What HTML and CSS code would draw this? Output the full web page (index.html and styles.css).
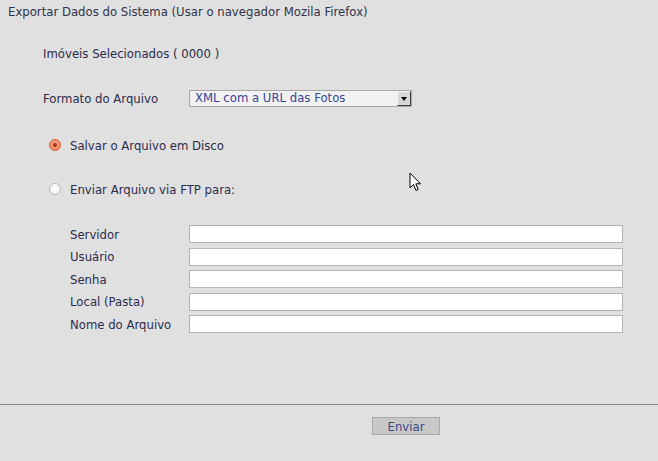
FILE: index.html
```html
<!DOCTYPE html>
<html lang="pt">
<head>
<meta charset="utf-8">
<title>Exportar Dados do Sistema</title>
<link rel="stylesheet" href="styles.css">
</head>
<body>
<div class="page">
  <div class="title">Exportar Dados do Sistema (Usar o navegador Mozila Firefox)</div>
  <div class="content">
    <div class="line selected">Imóveis Selecionados ( 0000 )</div>
    <div class="line format">
      <span class="format-label">Formato do Arquivo</span>
      <div class="select">
        <span class="select-text">XML com a URL das Fotos</span>
        <span class="select-btn"><span class="tri"></span></span>
      </div>
    </div>
    <div class="line radio-row r1">
      <span class="radio checked"><span class="dot"></span></span>
      <span class="radio-label">Salvar o Arquivo em Disco</span>
    </div>
    <div class="line radio-row r2">
      <span class="radio"></span>
      <span class="radio-label">Enviar Arquivo via FTP para:</span>
    </div>
    <div class="fields">
      <span class="f-label">Servidor</span><span class="input"></span>
      <span class="f-label">Usuário</span><span class="input"></span>
      <span class="f-label">Senha</span><span class="input"></span>
      <span class="f-label">Local (Pasta)</span><span class="input"></span>
      <span class="f-label">Nome do Arquivo</span><span class="input"></span>
    </div>
  </div>
  <div class="footer">
    <span class="button">Enviar</span>
  </div>
  <svg class="cursor" width="13" height="20" viewBox="0 0 13 20">
    <path d="M1 1 L1 16 L4.5 12.5 L7 18.5 L9.2 17.5 L6.8 11.8 L11.5 11.8 Z" fill="#fff" stroke="#000" stroke-width="1" stroke-linejoin="miter"/>
  </svg>
</div>
</body>
</html>
```

FILE: styles.css
```css
html, body {
  margin: 0;
  padding: 0;
  background: #e0e0e0;
}
body {
  font-family: "DejaVu Sans", Verdana, sans-serif;
  font-size: 11.7px;
  color: #2b2c4c;
}
.page {
  position: relative;
  width: 658px;
  height: 461px;
  overflow: hidden;
}
.title {
  padding: 4px 0 0 8px;
  height: 16px;
  line-height: 16px;
  color: #30324a;
}
.content {
  display: flex;
  flex-direction: column;
  padding-left: 43px;
}
.line {
  height: 16px;
  line-height: 16px;
  display: flex;
  align-items: center;
}
.selected {
  margin-top: 26px;
}
.format {
  margin-top: 28px;
  height: 17px;
}
.format-label {
  width: 146px;
  line-height: 17px;
  padding-top: 2px;
}
.select {
  width: 223px;
  height: 17px;
  box-sizing: border-box;
  background: #f2f2f2;
  border: 1px solid #a8a8a8;
  display: flex;
  align-items: stretch;
}
.select-text {
  flex: 1;
  padding-left: 5px;
  line-height: 15px;
  color: #34469a;
}
.select-btn {
  width: 14px;
  box-sizing: border-box;
  background: #d8d8d8;
  border-top: 1px solid #f4f4f4;
  border-left: 1px solid #f4f4f4;
  border-right: 1px solid #404040;
  border-bottom: 1px solid #404040;
  display: flex;
  align-items: center;
  justify-content: center;
}
.tri {
  width: 0;
  height: 0;
  border-left: 3px solid transparent;
  border-right: 3px solid transparent;
  border-top: 4px solid #000;
  margin-top: 1px;
}
.radio-row {
  padding-left: 6px;
}
.r1 {
  margin-top: 30px;
}
.r2 {
  margin-top: 28px;
}
.radio {
  width: 12px;
  height: 12px;
  box-sizing: border-box;
  border-radius: 50%;
  border: 1px solid #b8b8b8;
  background: radial-gradient(circle at 50% 40%, #ffffff 0%, #f4f4f4 70%, #e4e4e4 100%);
  display: flex;
  align-items: center;
  justify-content: center;
  margin-right: 9px;
}
.radio.checked {
  border-color: #d9643c;
  background: radial-gradient(circle at 50% 40%, #f8a688 0%, #f08a64 70%, #e2724c 100%);
}
.dot {
  width: 4px;
  height: 4px;
  border-radius: 50%;
  background: #a8321a;
}
.radio-label {
  padding-top: 1px;
}
.fields {
  margin-top: 28px;
  margin-left: 27px;
  display: grid;
  grid-template-columns: 119px 434px;
  grid-auto-rows: 18px;
  row-gap: 4.5px;
  align-items: center;
}
.f-label {
  line-height: 16px;
  padding-top: 1px;
}
.input {
  height: 18px;
  box-sizing: border-box;
  background: #fff;
  border: 1px solid #b4b4b4;
}
.footer {
  position: relative;
  margin-top: 71px;
  border-top: 1px solid #8a8a8a;
  padding-top: 12px;
  padding-left: 372px;
}
.button {
  display: flex;
  align-items: center;
  justify-content: center;
  width: 68px;
  height: 18px;
  box-sizing: border-box;
  background: #c8c8c8;
  border: 1px solid #a8a8a8;
  color: #3a4888;
  padding-top: 1px;
}
.cursor {
  position: absolute;
  left: 409px;
  top: 172px;
}
```
